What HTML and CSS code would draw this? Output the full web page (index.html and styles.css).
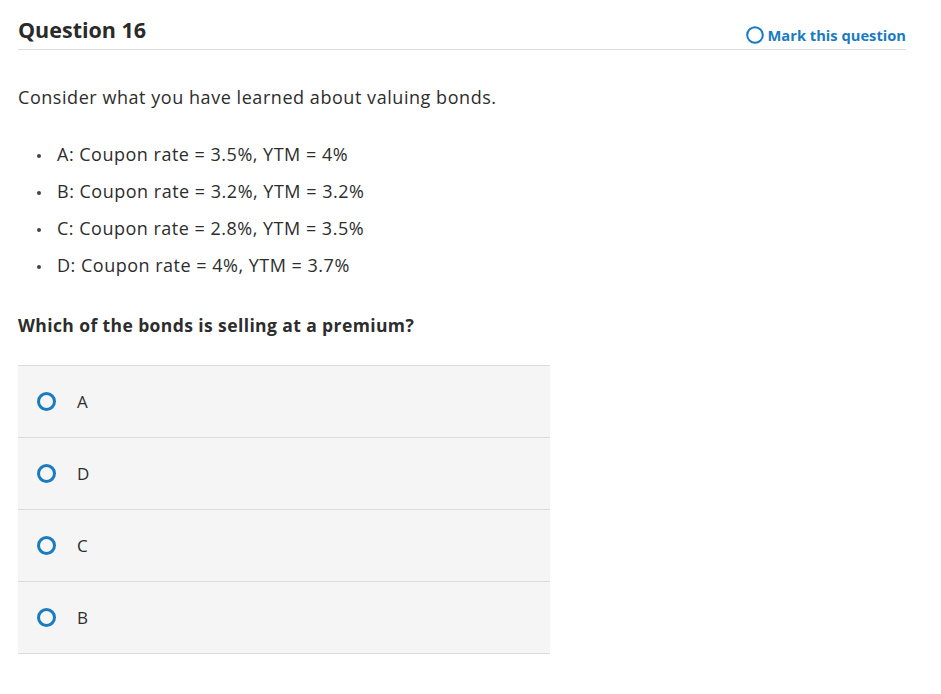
FILE: index.html
```html
<!DOCTYPE html>
<html>
<head>
<meta charset="utf-8">
<link rel="stylesheet" href="styles.css">
</head>
<body>
<div class="page">
  <header class="qhead">
    <h1 class="qtitle">Question 16</h1>
    <a class="mark">
      <svg class="mark-icon" width="18" height="18" viewBox="0 0 18 18"><circle cx="9" cy="9" r="7.8" fill="none" stroke="#1a7bc2" stroke-width="2"/></svg>
      <span>Mark this question</span>
    </a>
  </header>
  <p class="intro">Consider what you have learned about valuing bonds.</p>
  <ul class="bonds">
    <li>A: Coupon rate = 3.5%, YTM = 4%</li>
    <li>B: Coupon rate = 3.2%, YTM = 3.2%</li>
    <li>C: Coupon rate = 2.8%, YTM = 3.5%</li>
    <li>D: Coupon rate = 4%, YTM = 3.7%</li>
  </ul>
  <p class="prompt">Which of the bonds is selling at a premium?</p>
  <div class="options">
    <div class="option"><span class="radio"></span><span class="label">A</span></div>
    <div class="option"><span class="radio"></span><span class="label">D</span></div>
    <div class="option"><span class="radio"></span><span class="label">C</span></div>
    <div class="option"><span class="radio"></span><span class="label">B</span></div>
  </div>
</div>
</body>
</html>
```
FILE: styles.css
```css
html, body {
  margin: 0;
  padding: 0;
  background: #fff;
}
body {
  font-family: "Open Sans", "Liberation Sans", sans-serif;
  color: #2d2d2d;
}
.page {
  padding: 15px 35px 0 18px;
}
.qhead {
  display: flex;
  justify-content: space-between;
  align-items: flex-end;
  border-bottom: 1px solid #dcdcdc;
  padding-bottom: 4px;
}
.qtitle {
  margin: 0;
  font-size: 21.5px;
  font-weight: 700;
  color: #2a2a2a;
  line-height: 30px;
  letter-spacing: 0;
}
.mark {
  display: flex;
  align-items: center;
  gap: 4px;
  color: #1a7bc2;
  font-weight: 700;
  font-size: 14.7px;
  line-height: 20px;
  letter-spacing: 0;
}
.mark-icon { display: block; }
.intro {
  margin: 35px 0 0;
  font-size: 18px;
  line-height: 24px;
  letter-spacing: 0.55px;
}
.bonds {
  margin: 33px 0 0;
  padding: 0;
  list-style: none;
}
.bonds li {
  font-size: 18px;
  line-height: 24px;
  letter-spacing: 0.5px;
  margin-bottom: 13px;
  padding-left: 39px;
  position: relative;
}
.bonds li::before {
  content: "";
  position: absolute;
  left: 19px;
  top: 12px;
  width: 4px;
  height: 4px;
  border-radius: 50%;
  background: #444;
}
.prompt {
  margin: 36px 0 0;
  font-size: 17.5px;
  font-weight: 700;
  line-height: 24px;
  letter-spacing: 0.4px;
}
.options {
  margin-top: 28px;
  width: 532px;
  border-top: 1px solid #dcdcdc;
}
.option {
  display: flex;
  align-items: center;
  height: 71px;
  background: #f5f5f5;
  border-bottom: 1px solid #dcdcdc;
  padding-left: 19px;
}
.radio {
  width: 13px;
  height: 13px;
  border: 3px solid #1a7bc2;
  border-radius: 50%;
}
.label {
  margin-left: 21px;
  font-size: 17px;
}
```
